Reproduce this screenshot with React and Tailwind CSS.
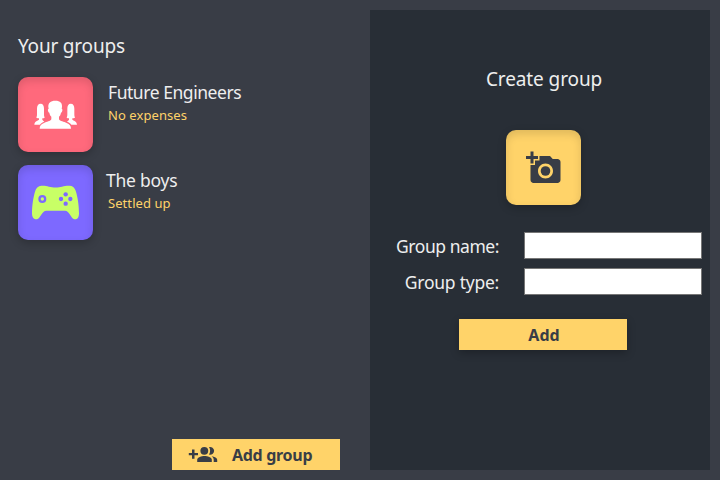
function PeopleIcon() {
  return (
    <svg width="75" height="75" viewBox="24 21 225 225" fill="white">
      <path d="M136 92c-15 0-22 7-21 19l1 5c-4 1-2 10 2 12 1 6 3 9 6 12v8c-3 6-14 7-22 11-9 4-13 8-13 17h94c0-9-4-13-13-17-8-4-20-5-23-11v-8c3-3 5-6 6-12 4-2 6-11 2-12l1-5c1-12-5-19-20-19z" />
      <path d="M92 101c-8 0-11 6-11 15v17c0 5-1 8-2 10 3 1 6 2 8 2v4c-3 3-13 4-14 15h17c3-4 7-7 13-9-2-2-5-4-6-6v-4c3 0 5-1 7-2-1-2-2-5-2-10v-17c0-9-3-15-10-15z" />
      <path d="M182 101c8 0 11 6 11 15v17c0 5 1 8 2 10-3 1-6 2-8 2v4c3 3 13 4 14 15h-17c-3-4-7-7-13-9 2-2 5-4 6-6v-4c-3 0-5-1-7-2 1-2 2-5 2-10v-17c0-9 3-15 10-15z" />
    </svg>
  );
}

function GamepadIcon() {
  return (
    <svg width="75" height="75" viewBox="24 21 225 225" fill="#c8ff66">
      <path d="M98 83C106 83 110 84 117 86C128 89 146 89 156 86C163 84 168 83 176 83C187 83 193 87 197 98C203 116 207 142 207 166C207 180 201 185 193 184C183 181 178 158 165 158H109C96 158 91 181 81 184C73 185 66 180 66 166C66 142 70 116 76 98C80 87 87 83 98 83Z" />
      <g fill="#7d69ff">
        <circle cx="97" cy="123" r="12" />
        <circle cx="167" cy="109" r="6.500" />
        <circle cx="153" cy="123" r="6.500" />
        <circle cx="181" cy="123" r="6.500" />
        <circle cx="167" cy="137" r="6.500" />
      </g>
      <circle cx="97" cy="123" r="5" />
    </svg>
  );
}

function CameraIcon() {
  return (
    <svg width="36" height="36" viewBox="0 0 24 24" fill="#393d46">
      <path d="M3 4V1h2v3h3v2H5v3H3V6H0V4h3zm3 6V7h3V4h7l1.830 2H21c1.100 0 2 .9 2 2v12c0 1.100-.9 2-2 2H5c-1.100 0-2-.9-2-2V10h3zm7 9c2.760 0 5-2.240 5-5s-2.240-5-5-5-5 2.240-5 5 2.240 5 5 5z" />
      <circle cx="13" cy="14" r="3.200" />
    </svg>
  );
}

function GroupAddIcon() {
  return (
    <svg width="30" height="18" viewBox="0 0 30 18" fill="#393d46" className="shrink-0">
      <path d="M4 3.500h2.500v3.500h3.500v2.300H6.500v3.500H4V9.300H.8V7H4z" />
      <circle cx="16.300" cy="4.800" r="3.900" />
      <path d="M9.200 16v-2.200c0-2.800 4.400-3.900 7.300-3.900s7.300 1.100 7.300 3.900V16z" />
      <path d="M21 1.100a3.900 3.900 0 1 1 0 7.400c1.500-2 1.500-5.400 0-7.400z" />
      <path d="M23.600 10.300c3 .4 5.600 1.500 5.600 3.500V16h-3.500v-2.200c0-1.500-.8-2.600-2.100-3.500z" />
    </svg>
  );
}

const tile =
  "flex h-[75px] w-[75px] shrink-0 items-center justify-center rounded-[10px]";
const tileShadow =
  "shadow-[0_3px_8px_rgba(0,0,0,0.22),inset_0_4px_8px_rgba(0,0,0,0.13)]";

function GroupRow({ color, icon, name, status, nameClass }) {
  return (
    <div className="flex h-[75px]">
      <div className={`${tile} ${tileShadow} ${color}`}>{icon}</div>
      <div className="flex flex-col whitespace-nowrap pt-[3px]">
        <div className={`h-[24px] text-[17.5px] leading-[24px] ${nameClass}`}>{name}</div>
        <div className="ml-[15px] text-[13px] leading-[22px] tracking-[0.07px] text-[#ffd369]">{status}</div>
      </div>
    </div>
  );
}

function Field({ label, labelClass }) {
  return (
    <label className="flex h-[27px] items-center justify-end">
      <span className={`mr-[25px] whitespace-nowrap pt-[2px] text-[17.5px] ${labelClass}`}>{label}</span>
      <input className="h-[27px] w-[178px] border border-[#767676] bg-white outline-none" />
    </label>
  );
}

export default function App() {
  return (
    <div className="flex h-[480px] w-[720px] overflow-hidden bg-[#393d46] p-[10px] font-['Noto_Sans','Open_Sans',sans-serif] text-[#eeeeee]">
      <section className="flex w-[360px] flex-col pl-2 pr-[30px]">
        <h1 className="mt-[22px] h-[28px] whitespace-nowrap text-[19px] leading-[28px] tracking-[-0.2px]">Your groups</h1>
        <div className="mt-[17px] flex flex-col gap-[13px]">
          <GroupRow
            color="bg-[#ff697c]"
            icon={<PeopleIcon />}
            name="Future Engineers"
            status="No expenses"
            nameClass="ml-[15px] tracking-[-0.45px]"
          />
          <GroupRow
            color="bg-[#7d69ff]"
            icon={<GamepadIcon />}
            name="The boys"
            status="Settled up"
            nameClass="ml-[13px] tracking-[-0.25px]"
          />
        </div>
        <button className="mt-auto flex h-[31px] w-[168px] items-center self-end bg-[#ffd369] pl-4 text-[16px] font-bold text-[#393d46]">
          <GroupAddIcon />
          <span className="ml-[14px] whitespace-nowrap tracking-[-0.3px]">Add group</span>
        </button>
      </section>
      <section className="flex w-[340px] flex-col items-center bg-[#282e36] pr-2">
        <h2 className="ml-4 mt-[55px] h-[28px] whitespace-nowrap text-[19px] leading-[28px] tracking-[-0.1px]">Create group</h2>
        <div className={`${tile} ${tileShadow} ml-[15px] mt-[37px] bg-[#ffd369]`}>
          <CameraIcon />
        </div>
        <div className="mt-[27px] flex flex-col gap-[9px] self-end">
          <Field label="Group name:" labelClass="tracking-[-0.45px]" />
          <Field label="Group type:" labelClass="tracking-[-0.25px]" />
        </div>
        <button className="ml-[14px] mt-6 flex h-[31px] w-[168px] items-center justify-center bg-[#ffd369] pl-[2px] pt-px text-[16px] font-bold text-[#393d46] shadow-[0_3px_8px_rgba(0,0,0,0.25)]">
          Add
        </button>
      </section>
    </div>
  );
}
